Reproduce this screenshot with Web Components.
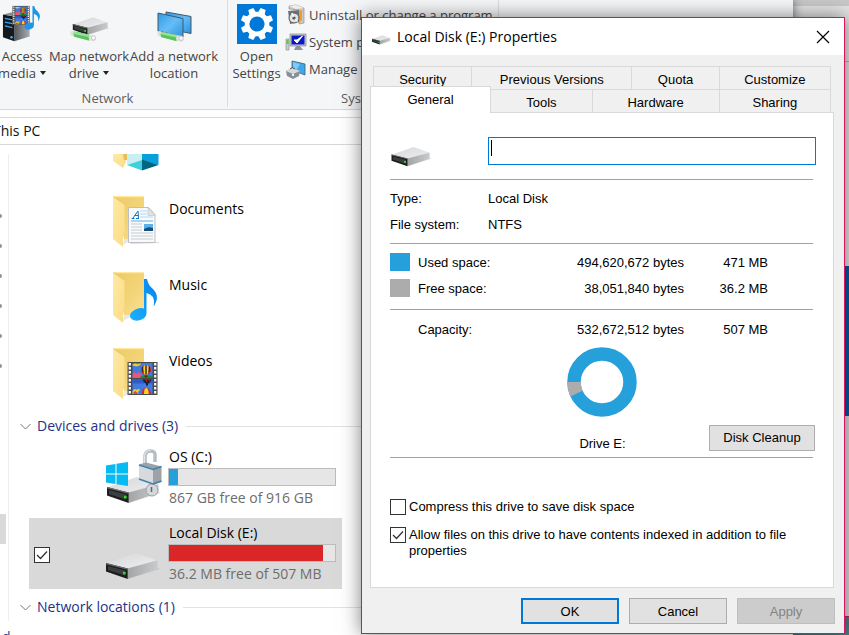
<!DOCTYPE html>
<html lang="en">
<head>
<meta charset="utf-8">
<title>This PC</title>
<style>
html,body{margin:0;height:100%;}
body{overflow:hidden;background:#e6e6e6;font-family:"Open Sans","Noto Sans",sans-serif;}
</style>
</head>
<body>
<pc-desktop></pc-desktop>
<script>
const define = (name, css, html) => customElements.define(name, class extends HTMLElement {
  constructor() {
    super();
    const root = this.attachShadow({mode: 'open'});
    const t = document.createElement('template');
    t.innerHTML = '<style>*{box-sizing:border-box}' + css + '</style>' + (typeof html === 'function' ? html(this) : html);
    root.append(t.content.cloneNode(true));
  }
});
const attr = (el, n, d = '') => el.getAttribute(n) ?? d;

const balloon = `<ellipse cx="5" cy="5" rx="5" ry="4.800" fill="#d8232a"/><path d="M3 .6Q1 5 3.500 9.500h3Q9 5 7 .6 5-.5 3 .6z" fill="#f5d327"/><path d="M4.300.2h1.400v9H4.300zM1 2.500l1-1 .6 6-1.300-1zM9 2.500l-1-1-.6 6 1.300-1z" fill="#222"/><rect x="3.800" y="10.500" width="2.400" height="1.800" fill="#4a2a10"/>`;
const film = `<rect width="30" height="33" fill="#4a4a4a"/><path d="M2.300 1v32M27.700 1v32" stroke="#fff" stroke-width="2.200" stroke-dasharray="2.400 1.600"/><path d="M.3 0v33M29.700 0v33" stroke="#9a9a9a" stroke-width=".7"/><path d="M5 1h20v15H5zM5 17.500h20V32H5z" fill="#3f7be0"/><path d="M5 17.500h20v4H5z" fill="#2c5cc4"/><path d="M5 2.500l3-1 2 .8 3-.8v1.500l-4 1.500-4-1z" fill="#e8d12c"/><path d="M5 12l2-2 2 2 2-2 3 3v3H5z" fill="#e25a7a"/><path d="M13 14.500l4-1.500 8 1v2H13z" fill="#1c8a3c"/><g transform="translate(13.500 3)">${balloon}</g><path d="M15 17.500h9q-1 3-3.500 4v2h-2v-2q-2.500-1-3.500-4z" fill="#1d1d2c"/><path d="M17.500 17.500h2l.3 3zM21 17.500h1.500l-1 2.500z" fill="#d8232a"/><path d="M5 29l2-2 2 .8 3-1v2l-2 1.400 2 1.800H5z" fill="#e8d12c"/><path d="M6 30l2-1 3 3H6z" fill="#d94a50"/><path d="M14.500 32q-.5-6 4-6t5 6z" fill="#d8232a"/><path d="M16.500 32q0-6 2.200-6t2.600 6z" fill="#f5d327"/>`;
const folderDefs = `<defs><linearGradient id="fb" x1="0" y1="0" x2="1" y2="1"><stop offset="0" stop-color="#ecc964"/><stop offset=".6" stop-color="#f3d57a"/><stop offset="1" stop-color="#fbe294"/></linearGradient><linearGradient id="ff" x1="0" y1="0" x2="1" y2="1"><stop offset="0" stop-color="#ffe9a6"/><stop offset="1" stop-color="#fbdc84"/></linearGradient></defs>`;
const folder = folderDefs + `<path d="M10 49l7-4v-2h-6z" fill="#d8d8d8" opacity=".6"/><path d="M0 0h31v43H11z" fill="url(#fb)"/><path d="M0 0h31v1.300H2z" fill="#ffe79d"/><path d="M0 1l11.500 8v28l-1.500 1v13L0 43z" fill="url(#ff)"/>`;
const disk = `<defs><linearGradient id="dt" x1="0" y1="0" x2="1" y2="1"><stop offset="0" stop-color="#d6d6d8"/><stop offset="1" stop-color="#eeeff0"/></linearGradient><linearGradient id="ds" x1="0" x2="1"><stop offset="0" stop-color="#a2a4a6"/><stop offset="1" stop-color="#c9cacc"/></linearGradient></defs><path d="M22 26l32-10-4-2z" fill="#777" opacity=".18"/><path d="M0 10.500L30 0l21 7.500L22 16z" fill="url(#dt)"/><path d="M21.500 15.500L51.500 7.300v8.500L21.500 26z" fill="url(#ds)"/><path d="M0 10l21.700 5.500V26L0 18.500z" fill="#1c1d1e"/><path d="M2 13l17 4.500v5L2 17z" fill="#3c3f40"/><path d="M0 10l21.700 5.500v1.200L0 11.200z" fill="#6d7072"/><rect x="17" y="18.800" width="2.600" height="2.600" fill="#2be02b"/>`;
const pipe = `<path d="M1 1q3-2 5 0l28 6q4 3 2 6.500-3 2-6 .5L2 7q-3-3-1-6z" fill="#dfe1df"/><path d="M6 1.200l21 4.300q-2 4 0 8.500L6 8.500q-2-4 0-7.300z" fill="#58c25c"/><path d="M6 1.500l21 4.300-.8 3L5 4.500z" fill="#94e296"/><circle cx="33" cy="10" r="3" fill="#f6f6f6" stroke="#bbb"/>`;
const note = (c) => `<path d="M15 0h3q1 6 6 10 6 6 3 13l-2 4q-1-.5 0-2 1-9-7.500-11V34q0 5-6 7-7 2-10-2-2-5 4-8 5-3 9.500-1.500z" fill="${c}"/>`;
const ICONS = {
  server: [42,40,`<defs><linearGradient id="sv" x1="0" x2="1"><stop offset="0" stop-color="#55585d"/><stop offset="1" stop-color="#a9acb2"/></linearGradient></defs><path d="M13 12l16-3v24l-16 5z" fill="url(#sv)"/><path d="M1 10l12 2v26L1 34z" fill="#15181c"/><path d="M1 10l13-3 15 2-16 3z" fill="#8a8d92"/><path d="M3 14l8 1.700M3 18l8 1.700M3 22l8 1.700" stroke="#3da7f5" stroke-width="1.300"/><circle cx="10" cy="34" r="1.300" fill="#36b8ff"/><g transform="translate(11 1) scale(.6)">${film}</g><g transform="translate(23 1) scale(.6 .6)">${note('#1e96e8')}</g>`],
  netdrive: [42,40,`<g transform="translate(4 13) scale(.71)">${disk}</g><g transform="translate(1 27) scale(.75)">${pipe}</g>`],
  netplace: [40,40,`<defs><linearGradient id="mn" x1="0" y1="0" x2="1" y2="1"><stop offset="0" stop-color="#2f9be6"/><stop offset=".5" stop-color="#66bdf6"/><stop offset="1" stop-color="#2b94e0"/></linearGradient></defs><path d="M12 8l25 4.500v17l-25-5z" fill="url(#mn)" stroke="#40576a"/><path d="M4 9l25 5.500V33L4 27z" fill="url(#mn)" stroke="#40576a"/><g transform="translate(3 27) scale(.73)">${pipe}</g>`],
  settings: [40,40,`<rect width="40" height="40" fill="#0078d7"/><g transform="translate(20 20)" fill="#fff">${[22.5,67.5,112.5,157.5,202.5,247.5,292.5,337.5].map(a=>`<path transform="rotate(${a})" d="M-3.700-10l1-6.200h5.400l1 6.200z"/>`).join('')}<circle r="12.300"/><circle r="7.600" fill="#0078d7"/></g>`],
  uninstall: [20,20,`<path d="M3 1l7-1 8 3v15l-5 1V5L3 4z" fill="#c9c9c4" stroke="#888" stroke-width=".6"/><path d="M3 1l7-1 8 3-8 1z" fill="#f1efe5"/><path d="M12 6l4-1v10l-4 3z" fill="#f29b2e"/><path d="M2 6l11-1v12l-9 2z" fill="#6e7276"/><circle cx="8" cy="13" r="5" fill="#dfe3e4" stroke="#555"/><circle cx="8" cy="13" r="1.600" fill="#444"/><path d="M8 13L5 8.500l2-.8zM8 13l4 3-1 1z" fill="#fff"/>`],
  system: [20,20,`<path d="M4 2h16v12H4z" fill="#c9cdd0" stroke="#777" stroke-width=".6"/><path d="M5.500 3.500h13v9h-13z" fill="#0b19c2"/><path d="M8 8l3 3 5.500-7-5.500 4z" fill="#fff" stroke="#fff"/><path d="M10 14h4l3 4H8z" fill="#8f9498"/><path d="M0 7h3v11H0z" fill="#c9cdd0" stroke="#888" stroke-width=".6"/><path d="M.500 8h2v4h-2z" fill="#4ed12c"/>`],
  manage: [20,20,`<path d="M6 2l13 3v11L6 11z" fill="#3fa7ea" stroke="#4a5b66" stroke-width=".8"/><path d="M7 3l7 2-4 7-3-1z" fill="#7bcaf8"/><path d="M0 12l6-3 8 3-1 5-6 3-6-3z" fill="#8a9095"/><path d="M0 12l6-3 8 3-7 3z" fill="#d6dade"/><path d="M4 10q2-3 5 0" fill="none" stroke="#555"/><path d="M6 15h2v2H6z" fill="#eee"/>`],
  objects: [48,17,`${folderDefs}<path d="M0 0h13v8l-3 6L0 7z" fill="url(#ff)"/><path d="M10 0h5v6h-4z" fill="#e9bd55"/><path d="M14 0h16v6l-16 5z" fill="#c8f0f0"/><path d="M29 0h16.500v11L29 6z" fill="#07a0dc"/><path d="M14 11l15-5v10.500z" fill="#3ed0de"/><path d="M29 5.500L45.500 11 29 16.500z" fill="#00657f"/>`],
  documents: [48,52,`${folder}<path d="M17 46h28l2 1-29 1z" fill="#bbb" opacity=".5"/><path d="M15.500 11.500h20l6.500 7v28H15.500z" fill="#f8f9fa" stroke="#bcc0c4"/><path d="M35 11.500v8h7z" fill="#dfe2e5" stroke="#bcc0c4" stroke-width=".6"/><path d="M18 25h22" stroke="#5bb2e8"/><path d="M27 15h7M27 18h7M27 21h13" stroke="#b5d9ef"/><path d="M18.500 22.500h3M23 22.500h3M20 22l5-7 .500 7M21.500 19.500h4" fill="none" stroke="#1a78c2"/><path d="M18 28h11M18 31h11M18 34h11M18 37h22M18 40h22M18 43h22" stroke="#c9cccf"/><rect x="31" y="28" width="9" height="7" fill="#5eb0e8"/><path d="M31 33q4-3 9-1v3h-9z" fill="#174f7e"/>`],
  music: [48,52,`${folder}<defs><linearGradient id="nt" x1="0" y1="1" x2="1" y2="0"><stop offset="0" stop-color="#1eb0ff"/><stop offset="1" stop-color="#0084ee"/></linearGradient></defs><g transform="translate(16 7)">${note('url(#nt)')}</g>`],
  videos: [48,52,`${folder}<g transform="translate(14.500 14)">${film}</g>`],
  osdrive: [56,56,`<g transform="translate(1 28)">${disk}</g><path d="M0 16.500l9.500-1.500v9.500H0zM10.500 14.800L22 13v11.500H10.500zM0 25.500h9.500V35L0 33.500zM10.500 25.500H22V37l-11.500-1.800z" fill="#06baf2"/><path d="M39 17V8q0-6 5.500-6T49 8v5" fill="none" stroke="#b5bec5" stroke-width="3.500"/><path d="M38.500 17V8q0-6.500 6-6.500" fill="none" stroke="#e2e7ea" stroke-width="1.200"/><circle cx="46" cy="41" r="6" fill="#d5d8da" stroke="#9ba0a4"/><path d="M45.500 38v5" stroke="#666" stroke-width="1.500"/><path d="M33 15.500l7-2 15.500 4-8 4z" fill="#9aa3aa"/><path d="M33 15.500l14 4.500v16l-14-5z" fill="#d7dadc"/><path d="M47 20l8.500-3v16L47 36z" fill="#9da2a6"/><path d="M33 16l14 4.500 8.500-3M33 30l14 5 8.500-3" fill="none" stroke="#3e83b0" stroke-width="1.600"/>`],
  disk: [54,27,disk],
};
define('win-icon', ':host{display:block;flex:none}svg{display:block;width:100%;height:100%;overflow:visible}', el => {
  const [w,h,body] = ICONS[attr(el,'name')];
  return `<svg viewBox="0 0 ${w} ${h}" aria-hidden="true">${body}</svg>`;
});

define('ribbon-button', `
:host{display:block}
button{all:unset;width:100%;display:flex;flex-direction:column;align-items:center;font-size:13px;line-height:17px;color:#444;text-align:center;white-space:nowrap}
win-icon{width:40px;height:40px;margin-bottom:4px}
i{display:inline-block;border:3px solid transparent;border-top:4px solid #222;border-bottom:0;margin-left:4px;vertical-align:3px}`,
el => `<button type="button"><win-icon name="${attr(el,'icon')}"></win-icon><span>${attr(el,'first')}</span><span>${attr(el,'second')}${el.hasAttribute('menu') ? '<i></i>' : ''}</span></button>`);

define('ribbon-command', `
:host{display:block}
button{all:unset;display:flex;align-items:center;gap:3px;height:27px;font-size:13px;color:#444;white-space:nowrap}
win-icon{width:20px;height:20px}`,
el => `<button type="button"><win-icon name="${attr(el,'icon')}"></win-icon><slot></slot></button>`);

define('ribbon-group', `
:host{display:flex;flex-direction:column;justify-content:space-between;border-right:1px solid #dcdddf;padding-top:4px}
.tools{display:flex;align-items:flex-start}
.name{text-align:center;font-size:13px;line-height:17px;color:#5d5d5d}`,
el => `<div class="tools"><slot></slot></div><div class="name">${attr(el,'name')}</div>`);

define('folder-item', `
:host{display:flex;gap:8px;height:76px;padding-left:104px;font-size:14px;line-height:20px;color:#000}
win-icon{width:48px;height:52px}
span{padding-top:3px}`,
el => `<win-icon name="${attr(el,'icon')}"></win-icon><span><slot></slot></span>`);

define('group-header', `
:host{display:flex;align-items:center;height:24px}
button{all:unset;display:flex;align-items:center;gap:6px;font-size:14px;line-height:20px;color:#1e3287;white-space:nowrap}
svg{width:11px;height:7px}
hr{flex:1;border:0;border-top:1px solid #e2e2e2;margin:0 0 0 8px}`,
`<button type="button"><svg viewBox="0 0 11 7" fill="none" stroke="#777"><path d="M.500 1l5 5 5-5"/></svg><slot></slot></button><hr>`);

define('tick-box', `
:host{display:block}
label{display:flex;gap:3px;line-height:16px}
.box{display:grid;flex:none;width:16px;height:16px}
input,svg{grid-area:1/1;margin:0;width:16px;height:16px}
input{appearance:none;border:1px solid #333;background:#fff}
svg{display:none;pointer-events:none}
input:checked+svg{display:block}`,
el => `<label><span class="box"><input type="checkbox" ${el.hasAttribute('checked')?'checked':''} ${el.hasAttribute('name')?`aria-label="${attr(el,'name')}"`:''}><svg viewBox="0 0 16 16" fill="none" stroke="#333" stroke-width="1.300"><path d="M3 8l3.500 3.500L13 4.500"/></svg></span><span><slot></slot></span></label>`);

define('drive-item', `
:host{display:grid;grid-template-columns:72px 62px 168px;padding:5px 6px 3px 5px;height:71px;font-size:14px;line-height:20px}
:host([selected]){background:#d9d9d9}
tick-box{align-self:center;visibility:hidden}
:host([selected]) tick-box{visibility:visible}
win-icon{width:54px;align-self:end;height:27px;margin-bottom:6px}
win-icon[name=osdrive]{width:56px;height:56px;margin-bottom:5px}
.bar{height:18px;border:1px solid #bcbcbc;background:#e6e6e6}
.fill{height:100%}
.name{color:#000;padding-bottom:1px}.free{color:#6d6d6d;padding-top:2px}
.name,.free{padding-left:1px;white-space:nowrap}`,
el => `<tick-box ${el.hasAttribute('selected')?'checked':''} name="${attr(el,'name')}"></tick-box><win-icon name="${attr(el,'icon')}"></win-icon><div><div class="name">${attr(el,'name')}</div><div class="bar" role="meter" aria-label="Used space" aria-valuenow="${attr(el,'used')}"><div class="fill" style="width:${attr(el,'used')}%;background:${attr(el,'color')}"></div></div><div class="free">${attr(el,'free')}</div></div>`);

define('explorer-window', `
:host{display:flex;flex-direction:column;background:#fff;overflow:hidden;box-shadow:0 0 10px rgba(0,0,0,.55)}
.ribbon{display:flex;height:110px;background:#f5f6f7;border-bottom:1px solid #d7d8da;padding-bottom:2px;flex:none}
ribbon-group{width:271px}
ribbon-group.net{width:240px}
.stack{margin:-3px 0 0 1px}
.address{height:28px;flex:none;margin-top:7px;border:1px solid #d7d8da;padding-left:4px;font-size:14px;line-height:26px;color:#111}
.body{display:flex;flex:1;min-height:0;margin-top:9px}
nav{width:21px;flex:none;padding-top:48px;border-right:1px solid #eee;margin-bottom:10px}
nav i{display:flow-root;height:30px;overflow:hidden}
nav i::before{content:"";display:block;width:8px;height:4px;margin:12px 0 0 6px;border-radius:2px;background:#89949e}
nav b{display:block;height:30px;margin-top:132px;width:18px;background:#d9d9d9}
main{flex:1;min-width:0}
.objects{padding-left:104px;height:42px}
.objects win-icon{width:48px;height:17px}
group-header{margin:-10px 0 0 11px}
group-header.net{margin-top:0}
.drives{margin-left:20px;width:313px;display:grid;gap:5px;padding:4px 0 6px}
footer{height:4px;flex:none;overflow:hidden;font-size:14px;line-height:11px;color:#174a8c;padding-left:14px}`,
`<div class="ribbon">
<ribbon-group class="net" name="Network"><ribbon-button style="width:68px" icon="server" first="Access" second="media" menu></ribbon-button><ribbon-button style="width:66px" icon="netdrive" first="Map network" second="drive" menu></ribbon-button><ribbon-button style="width:104px" icon="netplace" first="Add a network" second="location"></ribbon-button></ribbon-group>
<ribbon-group name="System"><ribbon-button style="width:57px" icon="settings" first="Open" second="Settings"></ribbon-button><div class="stack"><ribbon-command icon="uninstall">Uninstall or change a program</ribbon-command><ribbon-command icon="system">System properties</ribbon-command><ribbon-command icon="manage">Manage</ribbon-command></div></ribbon-group>
</div>
<div class="address">This PC</div>
<div class="body"><nav aria-label="Folders"><i></i><i></i><i></i><i></i><i></i><i></i><b></b></nav>
<main><div class="objects"><win-icon name="objects"></win-icon></div>
<folder-item icon="documents">Documents</folder-item><folder-item icon="music">Music</folder-item><folder-item icon="videos">Videos</folder-item>
<group-header>Devices and drives (3)</group-header>
<div class="drives"><drive-item icon="osdrive" name="OS (C:)" used="5.300" color="#26a0da" free="867 GB free of 916 GB"></drive-item><drive-item selected icon="disk" name="Local Disk (E:)" used="93" color="#da2626" free="36.2 MB free of 507 MB"></drive-item></div>
<group-header class="net">Network locations (1)</group-header></main></div>
<footer>d</footer>`);

define('push-button', `
:host{display:block}
button{width:100%;height:26px;padding:0;border:1px solid #adadad;background:#e1e1e1;font:inherit;color:#000}
:host([primary]) button{border:2px solid #0078d7}
button:disabled{background:#ccc;border-color:#bfbfbf;color:#838383}`,
el => `<button type="button" ${el.hasAttribute('disabled')?'disabled':''}><slot></slot></button>`);

define('tab-strip', `
:host{display:block}
.row{display:flex;margin:0 3px}
button{font:inherit;color:#000;background:#f0f0f0;border:1px solid #d9d9d9;border-width:1px 1px 0 0;padding:3px 0 0;height:23px;min-width:0}
.row button:first-child{border-left-width:1px}
.low{margin-left:0}
.low button.on{background:#fff;border-left-width:1px;height:27px;margin:-3px 0 -1px;position:relative;padding:0 0 1px}`,
`<div class="row" role="tablist"><button style="flex:98">Security</button><button style="flex:160">Previous Versions</button><button style="flex:87">Quota</button><button style="flex:111">Customize</button></div>
<div class="row low" role="tablist"><button class="on" style="flex:120" aria-selected="true">General</button><button style="flex:101">Tools</button><button style="flex:127">Hardware</button><button style="flex:111">Sharing</button></div>`);

define('space-row', `
:host{display:grid;grid-template-columns:28px 1fr 130px 84px 45px;align-items:center;height:26px}
i{width:20px;height:18px}
span{text-align:right;white-space:nowrap}
:host{padding-right:45px;grid-template-columns:28px 1fr 130px 84px}`,
el => `<i style="background:${attr(el,'color','none')}"></i><div>${attr(el,'label')}</div><span>${attr(el,'bytes')}</span><span>${attr(el,'size')}</span>`);

define('properties-dialog', `
:host{display:block;background:#f0f0f0;border:1px solid #d8155c;box-shadow:0 0 18px rgba(0,0,0,.5);font:13px "Liberation Sans",Arial,sans-serif;color:#000}
header{display:flex;align-items:center;height:37px;background:#fff;padding:0 14px 0 10px;font:14px "Open Sans",sans-serif;gap:6px}
header win-icon{width:19px;height:10px;margin-top:7px}
header span{flex:1}
header button{all:unset;width:14px;height:14px}
header svg{display:block}
tab-strip{margin:11px 10px 0 8px}
.panel{margin:0 10px 0 8px;border:1px solid #d9d9d9;background:#fff;padding:24px 17px 28px 19px}
.name{display:grid;grid-template-columns:98px 1fr;align-items:start;height:28px;margin-bottom:14px}
.name win-icon{width:41px;height:20px;margin:10px 0 0 1px}
input{width:100%;height:28px;border:1px solid #0078d7;padding:0 2px;font:inherit;background:#fff;outline:0}
.field{display:grid;grid-template:28px/1fr}
.field input,.field i{grid-area:1/1}
.field i{width:1px;height:16px;background:#000;margin:3px 0 0 3px}
hr{border:0;border-top:1px solid #a0a0a0;margin:0 3px 0 0}
dl{display:grid;grid-template-columns:98px 1fr;line-height:26px;margin:0;padding:6px 0 5px}
dd{margin:0}
.space{padding:5px 0 8px}
.total{padding:6px 0 5px}
.space,.total{margin-right:3px}
.chart{display:block;margin:0 auto;width:70px;height:70px}
.ring{margin-right:3px}
.drive{display:grid;grid-template-columns:1fr auto 1fr;align-items:center;margin:7px 1px 6px 0}
.drive span{padding-top:12px}
.drive push-button{width:106px;justify-self:end}
.ticks{display:grid;gap:12px;padding-top:41px}
.actions{display:flex;justify-content:flex-end;gap:10px;padding:10px 9px 9px}
.actions push-button{width:98px}`,
`<header><win-icon name="disk"></win-icon><span>Local Disk (E:) Properties</span><button type="button" aria-label="Close"><svg width="14" height="14" viewBox="0 0 14 14" stroke="#000" stroke-width="1.200"><path d="M1 1l12 12M13 1L1 13"/></svg></button></header>
<tab-strip></tab-strip>
<div class="panel">
<div class="name"><win-icon name="disk"></win-icon><div class="field"><input type="text" aria-label="Volume label"><i></i></div></div>
<hr><dl><dt>Type:</dt><dd>Local Disk</dd><dt>File system:</dt><dd>NTFS</dd></dl>
<hr><div class="space"><space-row color="#26a0da" label="Used space:" bytes="494,620,672 bytes" size="471 MB"></space-row><space-row color="#acacac" label="Free space:" bytes="38,051,840 bytes" size="36.2 MB"></space-row></div>
<hr><div class="total"><space-row label="Capacity:" bytes="532,672,512 bytes" size="507 MB"></space-row></div>
<div class="ring"><svg class="chart" viewBox="0 0 70 70" fill="none" stroke-width="13.500"><circle cx="35" cy="35" r="28" stroke="#26a0da"/><path d="M7 35a28 28 0 0 0 2.500 11.600" stroke="#acacac"/></svg></div>
<div class="drive"><i></i><span>Drive E:</span><push-button>Disk Cleanup</push-button></div>
<hr><div class="ticks"><tick-box>Compress this drive to save disk space</tick-box><tick-box checked>Allow files on this drive to have contents indexed in addition to file properties</tick-box></div>
</div>
<div class="actions"><push-button primary>OK</push-button><push-button>Cancel</push-button><push-button disabled>Apply</push-button></div>`);

define('pc-desktop', `
:host{display:block;position:relative;height:100%;overflow:hidden;background:#e4e4e4}
.back{position:absolute;inset:0 0 0 auto;width:60px;display:grid;grid-template-rows:6px 55px 1px 204px 150px 200px 1fr}
.back i:nth-child(1){background:#c8c8c8}.back i:nth-child(3){background:#b5b5b5}
.back i:nth-child(5){background:#0058a5}.back i:nth-child(6){background:#dcdadd}
.back i:nth-child(7){background:#4b7c85;border-top:1px solid #d8155c}
explorer-window{position:absolute;inset:0 56px 0 -12px}
properties-dialog{position:absolute;top:17px;left:361px;right:4px}`,
`<div class="back"><i></i><i></i><i></i><i></i><i></i><i></i><i></i></div><explorer-window></explorer-window><properties-dialog></properties-dialog>`);
</script>
</body>
</html>
